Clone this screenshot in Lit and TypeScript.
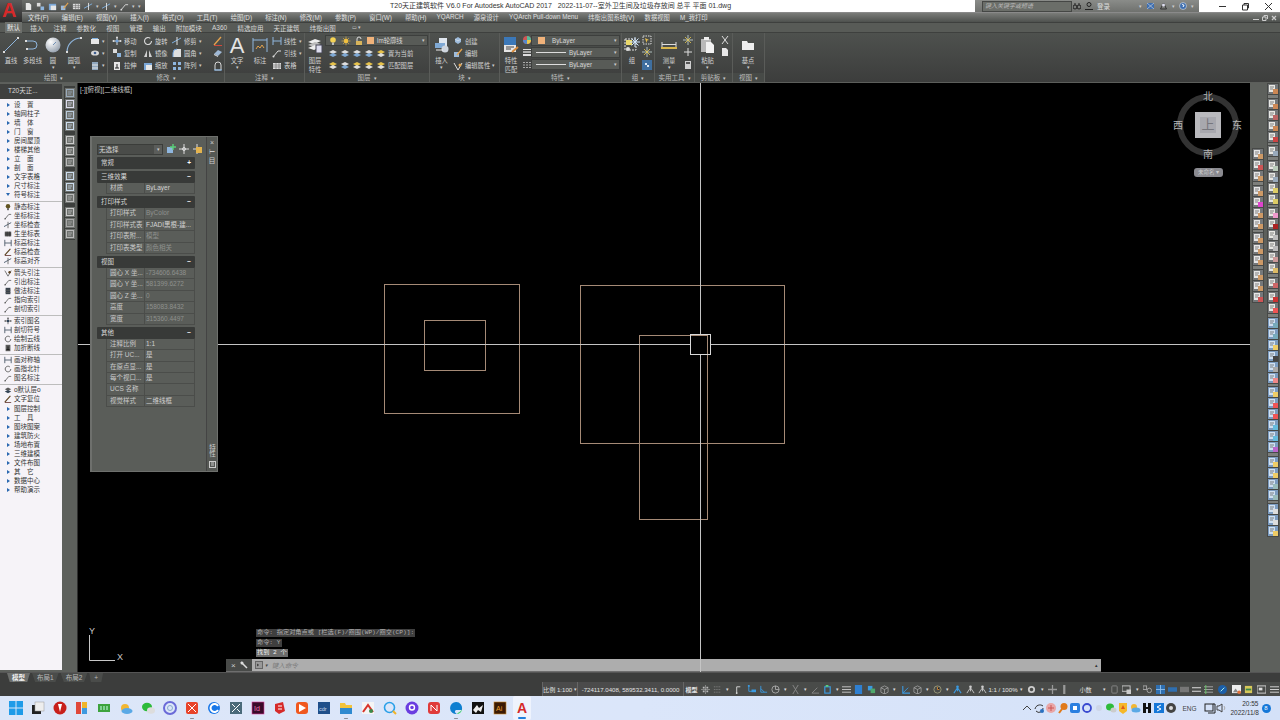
import { LitElement, html, css, svg } from "lit";
import { customElement } from "lit/decorators.js";

const ic = (w: number, h: number, body: unknown) =>
  html`<svg class="ic" width=${w} height=${h} viewBox=${`0 0 ${w} ${h}`}>${body}</svg>`;

// small 10x10 ribbon glyphs
const G: Record<string, unknown> = {
  rect: svg`<rect x="1" y="3" width="8" height="5" fill="#e8e8e8"/><rect x="2" y="2" width="6" height="1" fill="#7fb0e0"/>`,
  eye: svg`<ellipse cx="5" cy="5" rx="4" ry="2.6" fill="#d8d8d8"/><circle cx="5" cy="5" r="1.3" fill="#3f5f8f"/>`,
  hatch: svg`<rect x="2" y="1" width="6" height="8" fill="#8fa6bd"/><path d="M2 4h6M2 7h6" stroke="#e4e4e4"/>`,
  move: svg`<path d="M5 1v8M1 5h8" stroke="#d9d9d9"/><circle cx="5" cy="5" r="1.6" fill="#6fa0d8"/><circle cx="5" cy="1.5" r="1" fill="#ddd"/><circle cx="1.5" cy="5" r="1" fill="#ddd"/><circle cx="8.5" cy="5" r="1" fill="#ddd"/>`,
  rotate: svg`<path d="M8.5 5a3.5 3.5 0 1 1-1.2-2.6" fill="none" stroke="#d8d8d8" stroke-width="1.1"/>`,
  trim: svg`<path d="M0 7l9-5" stroke="#7fb0e0"/><path d="M5 1v8" stroke="#e0e0e0"/>`,
  copy: svg`<rect x="1" y="1" width="4" height="4" fill="#dcdcdc"/><rect x="5" y="5" width="4" height="4" fill="#8fb6de"/>`,
  mirror: svg`<path d="M1 9l3-7v7zM9 9L6 2v7z" fill="#d0d0d0"/>`,
  fillet: svg`<path d="M1 9V5a4 4 0 0 1 4-4h4v8z" fill="#dfdfdf"/><path d="M1 9V5a4 4 0 0 1 4-4" fill="none" stroke="#6fa0d8"/>`,
  stretch: svg`<rect x="2" y="1" width="6" height="8" fill="#e6e6e6"/><path d="M5 3v4M3 7h4" stroke="#222"/>`,
  scale: svg`<rect x="1" y="2" width="8" height="7" fill="#7aa6d6"/><rect x="3" y="4" width="6" height="5" fill="#e6e6e6"/>`,
  array: svg`<path d="M1 1h3v3H1zM6 1h3v3H6zM1 6h3v3H1zM6 6h3v3H6z" fill="#8fb6de"/>`,
  pen: svg`<path d="M1 9l7-8" stroke="#e3a34e" stroke-width="1.4"/><path d="M1 9.5h8" stroke="#d04a3a"/>`,
  erase: svg`<path d="M1 6l4-4 4 2-4 4z" fill="#9fb9d6"/><path d="M1 6l4 2v1L1 7z" fill="#ddd"/>`,
  offset: svg`<path d="M2 9V4a3 3 0 0 1 6 0v5z" fill="none" stroke="#d8d8d8"/><path d="M1 9h8" stroke="#7fb0e0"/>`,
  dimlin: svg`<path d="M1 1v8M9 1v8M1 5h8" stroke="#8fb6de"/>`,
  leader: svg`<path d="M1 9l5-6h3" fill="none" stroke="#ddd"/><circle cx="1.5" cy="8.5" r="1" fill="#ddd"/>`,
  table: svg`<rect x="1" y="2" width="8" height="6" fill="#ddd"/><path d="M1 4h8M1 6h8M4 2v6M7 2v6" stroke="#666" stroke-width=".6"/>`,
  bulb: svg`<circle cx="5" cy="4" r="2.8" fill="#f4d253"/><rect x="4" y="6.5" width="2" height="2.5" fill="#bbb"/>`,
  sun: svg`<circle cx="5" cy="5" r="2.2" fill="#f0c040"/><path d="M5 .5v9M.5 5h9M2 2l6 6M8 2l-6 6" stroke="#f0c040" stroke-width=".6"/>`,
  lock: svg`<rect x="2" y="5" width="6" height="4" fill="#d8b45a"/><path d="M3 5V3a2 2 0 0 1 4 0" fill="none" stroke="#ddd"/>`,
  lay1: svg`<path d="M1 4l4-2 4 2-4 2z" fill="#dfdfdf"/><path d="M1 7l4-2 4 2-4 2z" fill="#7fa9d4"/>`,
  lay2: svg`<path d="M1 4l4-2 4 2-4 2z" fill="#e6c24a"/><path d="M1 7l4-2 4 2-4 2z" fill="#dfdfdf"/>`,
  block: svg`<path d="M2 3l3-2 3 2v3l-3 2-3-2z" fill="#9dbbdc"/><path d="M2 3l3 2 3-2" stroke="#eee" fill="none" stroke-width=".6"/>`,
  edit: svg`<path d="M1 4h5v5H1z" fill="#9dbbdc"/><path d="M4 7l5-6" stroke="#e3a34e" stroke-width="1.3"/>`,
  attr: svg`<path d="M1 2l4 7 4-7" fill="none" stroke="#ddd"/><circle cx="7" cy="4" r="1.5" fill="#e3a34e"/>`,
  wheel: svg`<circle cx="5" cy="5" r="4" fill="#c55"/><path d="M5 5V1a4 4 0 0 1 4 4z" fill="#5b9"/><path d="M5 5h4a4 4 0 0 1-4 4z" fill="#e7c94d"/><path d="M5 5v4a4 4 0 0 1-4-4z" fill="#58c"/>`,
  lw: svg`<path d="M1 2.5h8" stroke="#ddd"/><path d="M1 5h8" stroke="#ddd" stroke-width="1.4"/><path d="M1 8h8" stroke="#ddd" stroke-width="2"/>`,
  ltype: svg`<path d="M1 2.5h8M1 5h8M1 7.5h8" stroke="#aaa" stroke-dasharray="2 1"/>`,
  sel: svg`<rect x="1" y="1" width="8" height="8" fill="none" stroke="#ddd" stroke-dasharray="1.5 1"/><path d="M3 3l4 2-2 .6L4.5 8z" fill="#e8c04c"/>`,
  grpsel: svg`<rect x="0" y="0" width="10" height="10" fill="#3f6f9f"/><path d="M3 3h2v2H3zM5 5h2v2H5z" fill="#dfe9f4"/>`,
  spark: svg`<path d="M5 0v10M0 5h10" stroke="#cdd" stroke-width=".8"/><path d="M2 2l6 6M8 2L2 8" stroke="#e7c94d" stroke-width=".8"/>`,
  plus: svg`<path d="M5 1v8M1 5h8" stroke="#ddd"/>`,
  calc: svg`<rect x="2" y="1" width="6" height="8" fill="#cfcfcf"/><rect x="3" y="2" width="4" height="2" fill="#555"/>`,
  cut: svg`<path d="M2 1l6 8M8 1L2 9" stroke="#ddd"/>`,
  pasteS: svg`<path d="M2 1h4l2 2v6H2z" fill="#e8e8e8"/>`,
};
const g = (n: string) => ic(10, 10, G[n]);

// big ribbon glyphs, 16x16
const B: Record<string, unknown> = {
  line: svg`<path d="M1 15L15 1" stroke="#8fb6de" stroke-width="1"/><rect x="0" y="14" width="2" height="2" fill="#ddd"/><rect x="14" y="0" width="2" height="2" fill="#ddd"/>`,
  pline: svg`<path d="M1 4h7a4 4 0 0 1 0 8H2" fill="none" stroke="#8fb6de"/><rect x="0" y="3" width="2" height="2" fill="#ddd"/><rect x="1" y="11" width="2" height="2" fill="#ddd"/>`,
  circle: svg`<defs><radialGradient id="sph" cx=".35" cy=".3" r=".8"><stop offset="0" stop-color="#fff"/><stop offset="1" stop-color="#8e9aa8"/></radialGradient></defs><circle cx="8" cy="8" r="7.5" fill="url(#sph)"/><path d="M8 8l3-3" stroke="#6f8fb4"/>`,
  arc: svg`<path d="M1 15A14 14 0 0 1 15 1" fill="none" stroke="#8fb6de" stroke-width="1.2"/><rect x="0" y="14" width="2" height="2" fill="#ddd"/><rect x="14" y="0" width="2" height="2" fill="#ddd"/>`,
  dim: svg`<path d="M1 1v14M15 1v14M1 3h14" stroke="#8fb6de"/><path d="M4 12l2-3 2 2 2-3 2 3" fill="none" stroke="#e3a34e"/>`,
  layer: svg`<path d="M1 5l7-3 6 2-7 3z" fill="#eee"/><path d="M1 8l7-3 6 2-7 3z" fill="#bbb"/><path d="M1 11l7-3 6 2-7 3z" fill="#eee"/><rect x="9" y="8" width="6" height="8" fill="#dde" stroke="#445"/>`,
  insert: svg`<rect x="5" y="1" width="8" height="10" fill="#dfe6ee"/><rect x="1" y="6" width="10" height="5" fill="#7fa9d4"/><circle cx="11" cy="12" r="3.5" fill="#cfd6de"/><path d="M2 13h7" stroke="#eee"/>`,
  match: svg`<rect x="1" y="0" width="12" height="8" fill="#3b78b8"/><rect x="1" y="8" width="12" height="7" fill="#e6e6e6"/><path d="M3 10h8M3 12h5" stroke="#444"/><path d="M9 15l6-5" stroke="#d68a3a" stroke-width="2"/>`,
  group: svg`<rect x="1" y="2" width="11" height="11" fill="none" stroke="#ddd" stroke-dasharray="2 1"/><rect x="2" y="3" width="6" height="5" fill="#e9d86a"/><circle cx="4" cy="12" r="2" fill="#ddd"/><path d="M11 0v10M6 5h10M7.500 1.500l7 7M14.500 1.500l-7 7" stroke="#cfe4fa"/>`,
  measure: svg`<path d="M1 5v5M15 5v5M1 7.500h14" stroke="#ddd"/><rect x="0" y="10" width="16" height="2" fill="#d9b64c"/>`,
  paste: svg`<rect x="1" y="2" width="10" height="13" fill="#b9b9b9"/><rect x="4" y="0" width="5" height="3" fill="#eee"/><path d="M6 5h5l3 3v8H6z" fill="#f2f2f2"/>`,
  base: svg`<path d="M2 4h5l1 2h6v7H2z" fill="#eee"/>`,
};
const big = (n: string) => ic(16, 16, B[n]);

// toolbar icon on the left and right strips, pale page with a coloured mark
const tool = (accent: string, base = "#e8e8e4", blue = false) =>
  ic(10, 10, svg`<rect width="10" height="10" fill=${blue ? "#7c9cc0" : "#75787a"}/>
    <rect x="1" y="1" width="6" height="7" fill=${base}/>
    <path d="M2 3h4M2 5h3" stroke="#555" stroke-width=".7"/>
    <rect x="5" y="5" width="5" height="5" fill=${accent}/>`);

const MENU = ["文件(F)", "编辑(E)", "视图(V)", "插入(I)", "格式(O)", "工具(T)", "绘图(D)", "标注(N)", "修改(M)", "参数(P)", "窗口(W)", "帮助(H)", "YQARCH", "源泉设计", "YQArch Pull-down Menu", "纬衡出图系统(V)", "数据视图", "M_我打印"];
const TABS = ["默认", "插入", "注释", "参数化", "视图", "管理", "输出", "附加模块", "A360", "精选应用", "天正建筑", "纬衡出图"];

type T20Row = { t: string; i?: string };
const T20: T20Row[][] = [
  ["设　置", "轴网柱子", "墙　体", "门　窗", "房间屋顶", "楼梯其他", "立　面", "剖　面", "文字表格", "尺寸标注", "符号标注"].map((t) => ({ t })),
  [["静态标注", "bulb"], ["坐标标注", "leader"], ["坐标检查", "trim"], ["生坐标表", "table"], ["标高标注", "dimlin"], ["标高检查", "pen"], ["标高对齐", "trim"]].map(([t, i]) => ({ t, i })),
  [["箭头引注", "attr"], ["引出标注", "leader"], ["做法标注", "hatch"], ["指向索引", "leader"], ["剖切索引", "leader"]].map(([t, i]) => ({ t, i })),
  [["索引图名", "move"], ["剖切符号", "dimlin"], ["绘制云线", "rotate"], ["加折断线", "stretch"]].map(([t, i]) => ({ t, i })),
  [["画对称轴", "dimlin"], ["画指北针", "rotate"], ["图名标注", "leader"]].map(([t, i]) => ({ t, i })),
  [["o默认层o", "lay1"], ["文字复位", "pen"]].map(([t, i]) => ({ t, i })),
  ["图层控制", "工　具", "图块图案", "建筑防火", "场地布置", "三维建模", "文件布图", "其　它", "数据中心", "帮助演示"].map((t) => ({ t })),
];

type Row = [string, string?, boolean?];
type Sec = [string, string, Row[]];
const PROPS: Sec[] = [
  ["常规", "+", []],
  ["三维效果", "−", [["材质", "ByLayer", true]]],
  ["打印样式", "−", [["打印样式", "ByColor"], ["打印样式表", "FJADI黑根-建...", true], ["打印表附...", "模型"], ["打印表类型", "颜色相关"]]],
  ["视图", "−", [["圆心 X 坐...", "-734606.6438"], ["圆心 Y 坐...", "581399.6272"], ["圆心 Z 坐...", "0"], ["高度", "158083.8432"], ["宽度", "315360.4497"]]],
  ["其他", "−", [["注释比例", "1:1", true], ["打开 UC...", "是", true], ["在原点显...", "是", true], ["每个视口...", "是", true], ["UCS 名称", ""], ["视觉样式", "二维线框", true]]],
];

// status bar: [glyph or text, cell width]
const ST: Record<string, unknown> = {
  grid: svg`<path d="M2 2h2v2H2zM6 2h2v2H6zM2 6h2v2H2zM6 6h2v2H6z" fill="#bbb"/><path d="M5 0v10M0 5h10" stroke="#bbb" stroke-width=".6"/>`,
  dots: svg`<path d="M1 2h8M1 5h8M1 8h8" stroke="#888" stroke-dasharray="1 1"/>`,
  infer: svg`<path d="M3 9V2h4" fill="none" stroke="#ddd"/><circle cx="3" cy="9" r="1" fill="#ddd"/>`,
  snap: svg`<path d="M2 1v6h8" fill="none" stroke="#3b9ae0"/><rect x="1" y="0" width="2" height="2" fill="#3b9ae0"/><rect x="5" y="5" width="5" height="3" fill="#3b9ae0"/>`,
  ortho: svg`<path d="M2 1v7h7" fill="none" stroke="#3b9ae0"/><path d="M2 4l4 4" stroke="#3b9ae0"/>`,
  polar: svg`<circle cx="5" cy="5" r="4" fill="none" stroke="#aaa"/><path d="M5 5V1M5 5h4" stroke="#aaa"/>`,
  iso: svg`<path d="M2 0l6 10M8 0L2 10" stroke="#8a8a8a"/>`,
  angle: svg`<path d="M1 9h8M1 9l6-6" stroke="#888"/>`,
  osnap: svg`<rect x="2" y="2" width="6" height="7" fill="none" stroke="#3b9ae0" stroke-width="1.3"/><rect x="3" y="0" width="3" height="2" fill="#5ad07a"/>`,
  lw: svg`<path d="M0 2h10M0 5h10M0 8h10" stroke="#ccc"/>`,
  bsq: svg`<rect x="1" y="0" width="8" height="10" fill="#2f7fd0"/>`,
  pick: svg`<rect x="1" y="1" width="5" height="5" fill="#3b9ae0"/><rect x="4" y="4" width="5" height="5" fill="#4fa86a"/>`,
  cube: svg`<path d="M5 1l4 2v5l-4 2-4-2V3zM1 3l4 2 4-2M5 5v5" fill="none" stroke="#aaa" stroke-width=".8"/>`,
  ucs: svg`<path d="M2 1v8h8" fill="none" stroke="#3b9ae0" stroke-width="1.2"/><path d="M2 9l6-6" stroke="#3b9ae0"/>`,
  clock: svg`<circle cx="5" cy="5" r="4" fill="none" stroke="#9a9a7a"/><path d="M5 2v3h2" stroke="#d08a3a"/>`,
  person: svg`<circle cx="5" cy="2" r="1.5" fill="#3b9ae0"/><path d="M5 3L1 9M5 3l4 6M5 3v4" stroke="#3b9ae0" stroke-width="1.2"/>`,
  person2: svg`<circle cx="5" cy="2" r="1.5" fill="#ccc"/><path d="M5 3L1 9M5 3l4 6M5 3v4" stroke="#ccc"/>`,
  gear: svg`<circle cx="5" cy="5" r="3" fill="none" stroke="#ccc" stroke-width="2"/>`,
  plus: svg`<path d="M5 0v10M0 5h10" stroke="#999" stroke-width="1.4"/>`,
  grip: svg`<rect x="3.500" y="0" width="2.500" height="10" fill="#999"/>`,
  calc: svg`<rect x="2" y="1" width="6" height="8" rx="1" fill="none" stroke="#888"/>`,
  mon: svg`<rect x="0" y="1" width="9" height="6" fill="none" stroke="#ccc"/><rect x="5" y="5" width="5" height="5" fill="#ccc"/>`,
  iso2: svg`<rect x="0" y="1" width="4" height="4" fill="none" stroke="#aaa"/><circle cx="7" cy="6" r="2.500" fill="none" stroke="#aaa"/>`,
  bgrid: svg`<rect width="10" height="10" fill="#2f6fb0"/><path d="M5 0v10M0 5h10" stroke="#8fc0ee"/>`,
  bbar: svg`<rect y="2.500" width="10" height="5" fill="#2f6fb0"/>`,
  gbar: svg`<rect y="2" width="10" height="6" fill="#777"/>`,
  two: svg`<path d="M0 3h10M0 7h10" stroke="#ddd" stroke-width="1.2"/>`,
  three: svg`<path d="M0 2h10M0 5h10M0 8h10" stroke="#aaa"/><path d="M2 0v10" stroke="#6c6"/>`,
  bcir: svg`<circle cx="5" cy="5" r="5" fill="#1c5fa8"/><path d="M3 7l4-4" stroke="#bfe" />`,
  img: svg`<rect width="10" height="9" fill="#eee"/><path d="M1 8l3-4 3 4" fill="#888"/><circle cx="8" cy="8" r="2" fill="#e0703a"/>`,
  print: svg`<rect x="1" y="1" width="8" height="8" fill="#d8c85a"/><path d="M2 5h6" stroke="#3a8a4a" stroke-width="2"/>`,
  full: svg`<rect y="1" width="10" height="8" fill="none" stroke="#ddd"/><rect x="2" y="3" width="4" height="3" fill="#ddd"/>`,
  menu: svg`<path d="M0 2h10M0 5h10M0 8h10" stroke="#ddd"/>`,
};
const STATUS: [string, number][] = [["grid", 12], ["dots", 12], ["v", 8], ["infer", 14], ["snap", 12], ["ortho", 12], ["polar", 13], ["v", 7], ["iso", 13], ["v", 7], ["angle", 12], ["osnap", 12], ["v", 8], ["lw", 11], ["bsq", 13], ["pick", 13], ["cube", 12], ["v", 8], ["ucs", 14], ["cube", 11], ["v", 8], ["clock", 12], ["v", 8], ["person", 13], ["person2", 12], ["person2", 12]];
const STATUS2: [string, number][] = [["gear", 13], ["v", 8], ["plus", 12], ["grip", 13]];
const STATUS3: [string, number][] = [["calc", 12], ["mon", 13], ["v", 8], ["iso2", 13], ["bgrid", 12], ["bbar", 12], ["gbar", 12], ["two", 12], ["three", 12], ["bcir", 16], ["img", 12], ["print", 12], ["full", 14], ["menu", 12]];

// taskbar icons, 14x14
const TB: unknown[] = [
  svg`<path d="M0 0h6.500v6.500H0zM7.500 0H14v6.500H7.500zM0 7.500h6.500V14H0zM7.500 7.500H14V14H7.500z" fill="#1f9be8"/>`,
  svg`<rect x="1" y="4" width="9" height="9" fill="#222"/><rect x="4" y="1" width="9" height="9" fill="#eee" stroke="#999" stroke-width=".5"/>`,
  svg`<circle cx="7" cy="7" r="6.500" fill="#c8201c"/><path d="M5 3l4 0-2 8z" fill="#fff"/>`,
  svg`<rect x="1" y="1" width="5" height="12" fill="#e0483a"/><rect x="7" y="1" width="5" height="6" fill="#f0b429"/><rect x="7" y="7" width="5" height="6" fill="#3f9ae0"/>`,
  svg`<rect x="1" y="3" width="12" height="8" fill="#3da33d"/><path d="M4 5v4M7 5v4M10 5v4" stroke="#cfe" />`,
  svg`<circle cx="6" cy="7" r="4" fill="#f2b632"/><ellipse cx="8" cy="10" rx="5.500" ry="3" fill="#5aa9e6"/>`,
  svg`<ellipse cx="6" cy="6" rx="5" ry="4.200" fill="#2dbb3a"/><ellipse cx="10" cy="9.500" rx="4" ry="3.200" fill="#ddd"/>`,
  svg`<circle cx="7" cy="7" r="6" fill="none" stroke="#6a6ad8" stroke-width="2"/><circle cx="7" cy="7" r="2.500" fill="none" stroke="#8ac" />`,
  svg`<rect x="1" y="1" width="12" height="12" rx="2" fill="#e8432a"/><path d="M3 3l8 8M11 3l-8 8" stroke="#fff"/>`,
  svg`<circle cx="7" cy="7" r="6" fill="#1877e8"/><path d="M11 5a4 4 0 1 0 0 4" fill="none" stroke="#fff" stroke-width="2"/>`,
  svg`<rect x="1" y="1" width="12" height="12" fill="#4a6a7a"/><path d="M3 11l8-8M3 3l3 3M8 8l3 3" stroke="#fff"/>`,
  svg`<rect x="1" y="1" width="12" height="12" fill="#3a0a2a" stroke="#e0409a" stroke-width=".6"/><text x="3" y="10" font-size="7" fill="#f070b0" font-family="Liberation Sans">Id</text>`,
  svg`<path d="M2 3l8-2 2 9-6 3-4-3z" fill="#d62a2a"/><path d="M5 5h4M5 8h4" stroke="#fff"/>`,
  svg`<rect x="1" y="1" width="12" height="12" rx="3" fill="#f0581f"/><path d="M4 3l7 4-7 4z" fill="#fff"/>`,
  svg`<rect x="1" y="1" width="12" height="12" fill="#1f4f8a"/><text x="2" y="9.500" font-size="5.500" fill="#cde" font-family="Liberation Sans">cdr</text>`,
  svg`<path d="M1 2h5l1 2h6v9H1z" fill="#f3c33b"/><rect x="1" y="7" width="12" height="6" fill="#2f8ad0"/>`,
  svg`<rect x="1" y="1" width="12" height="12" fill="#f5f5f5"/><path d="M2 11l5-7 5 7" fill="none" stroke="#d8342a" stroke-width="2"/><circle cx="10" cy="10" r="2" fill="#3a8a4a"/>`,
  svg`<circle cx="6.500" cy="6.500" r="5" fill="none" stroke="#2aa0e8" stroke-width="1.600"/><path d="M10 10l3 3" stroke="#f0b429" stroke-width="2"/>`,
  svg`<circle cx="7" cy="7" r="6.500" fill="#6a3de0"/><circle cx="7" cy="6.500" r="2.500" fill="none" stroke="#fff" stroke-width="1.400"/>`,
  svg`<rect x="1" y="1" width="12" height="12" rx="3" fill="#e03a3a"/><path d="M4 10V4l6 6V4" fill="none" stroke="#fff"/>`,
  svg`<path d="M13 8A6 6 0 1 0 8 13c-2-1-3-3-1-4h6z" fill="#0f7fd0"/><path d="M13 8c0 3-3 5-5 5 1-2 3-1 5-5z" fill="#3fd06a"/>`,
  svg`<rect x="1" y="1" width="12" height="12" fill="#111"/><path d="M2 9l4-5 2 3 4-3-2 7-3-2-2 3z" fill="#eee"/>`,
  svg`<rect x="1" y="1" width="12" height="12" fill="#3a1a04" stroke="#d08a2a" stroke-width=".6"/><text x="3" y="10" font-size="7" fill="#f0a030" font-family="Liberation Sans">Ai</text>`,
];
const DOTTED = new Set([8, 15, 20]);

const TRAY: unknown[] = [
  svg`<path d="M2 8l4-4 4 4" fill="none" stroke="#444"/>`,
  svg`<path d="M2 7a5 5 0 0 1 8-3M10 6a4 4 0 0 1-7 3" fill="none" stroke="#333"/><circle cx="9" cy="9" r="2" fill="#2a6fc0"/>`,
  svg`<circle cx="6" cy="6" r="5" fill="#e9a6a6"/><path d="M3 6h6M6 3v6" stroke="#c55"/>`,
  svg`<circle cx="7" cy="4.500" r="3.500" fill="#e07a1a"/><path d="M5 7l-3 4" stroke="#e07a1a" stroke-width="2"/>`,
  svg`<rect x="1" y="1" width="10" height="10" rx="2" fill="#2a7fe0"/><rect x="4" y="4" width="4" height="4" fill="#fff"/>`,
  svg`<circle cx="6" cy="6" r="4" fill="none" stroke="#3a4ad0" stroke-width="1.800"/>`,
  svg`<circle cx="6" cy="6" r="3" fill="#cdd6e8"/>`,
  svg`<ellipse cx="5" cy="5" rx="4" ry="3.500" fill="#2dbb3a"/><ellipse cx="8.500" cy="8" rx="3" ry="2.500" fill="#ccc"/>`,
  svg`<path d="M2 1h8v8l-4 3-4-3z" fill="#f5b82a"/><path d="M6 3l-2 4h4z" fill="#e05a1a"/>`,
  svg`<circle cx="5" cy="5" r="3" fill="#f2b632"/><ellipse cx="7" cy="8" rx="4.500" ry="2.500" fill="#5aa9e6"/>`,
  svg`<path d="M2 1h3v10H2zM7 1h3v10H7zM2 5h8v2H2z" fill="#111"/>`,
  svg`<rect x="1" y="1" width="10" height="10" fill="#1577d8"/><path d="M8 3L4 5l4 2-4 2" fill="none" stroke="#fff"/>`,
  svg`<circle cx="6" cy="6" r="5" fill="#444"/><circle cx="6" cy="6" r="2" fill="#ddd"/>`,
];

@customElement("app-root")
export class AppRoot extends LitElement {
  static styles = css`
    :host {
      display: block;
      width: 1280px;
      height: 720px;
      overflow: hidden;
      font-family: "Liberation Sans", "Noto Sans CJK SC", sans-serif;
      font-size: 6.500px;
      color: #cfcfcf;
      background: #000;
    }
    .app { display: flex; flex-direction: column; height: 720px; position: relative; }
    .ic { display: block; flex: none; }
    .caret { font-size: 5px; color: #ccc; line-height: 1; }

    .titlebar { height: 12px; background: #fff; display: flex; color: #333; flex: none; }
    .qat { width: 123px; margin-left: 22px; background: linear-gradient(#6b6d6a, #4d4f4d); display: flex; align-items: center; gap: 3px; padding-left: 2px; box-sizing: border-box; }
    .title-text { width: 830px; font-size: 7px; line-height: 12px; padding-left: 245px; box-sizing: border-box; white-space: pre; }
    .info { width: 224px; flex: none; background: linear-gradient(#8a8c89, #6f716e); display: flex; align-items: center; }
    .search { width: 90px; flex: none; height: 11px; margin-left: 7px; background: #6b6e69; border: 1px solid #454745; box-sizing: border-box; font-size: 6px; font-style: italic; color: #bbb; line-height: 9px; padding-left: 2px; white-space: nowrap; overflow: hidden; }
    .info .u { margin-left: 1px; display: flex; align-items: center; gap: 4px; color: #ddd; font-size: 6.500px; white-space: nowrap; }
    .win { display: flex; margin-left: auto; align-items: center; gap: 14px; padding-right: 7px; }

    .appbtn { position: absolute; left: 0; top: 0; width: 22px; height: 22px; background: linear-gradient(#5b5b5b, #2c2c2c); z-index: 3; color: #d52a2a; font: bold 20px/20px "Liberation Sans", sans-serif; padding-left: 2px; box-sizing: border-box; }

    .menubar { height: 10px; margin-left: 22px; background: linear-gradient(#7a7c79, #4e514e); display: flex; align-items: center; color: #e0e0e0; font-size: 6.300px; border-top: 1px solid #8a8a8a; flex: none; box-sizing: border-box; }
    .menubar span { white-space: nowrap; }
    .menubar .items { display: flex; gap: 13.200px; padding-left: 6px; }
    .menubar .items span:nth-child(n + 13) { margin-left: -3px; }
    .menubar .ctl { margin-left: auto; display: flex; gap: 3px; padding-right: 3px; align-items: center; }

    .tabs { height: 11px; background: #585b57; border-top: 1px solid #3e403e; border-bottom: 1px solid #3e403e; display: flex; align-items: center; padding-left: 7px; gap: 10.200px; box-sizing: border-box; flex: none; color: #d6d6d6; font-size: 6.500px; }
    .tabs .on { background: #6d706c; box-shadow: 0 0 0 2px #6d706c; color: #eee; line-height: 8px; }

    .ribbon { height: 50px; flex: none; display: flex; background: linear-gradient(#4e514e, #3c3d3c); border-bottom: 1px solid #5c5e5b; box-sizing: border-box; }
    .panel { display: flex; flex-direction: column; border-right: 1px solid #5a5c59; box-sizing: border-box; flex: none; }
    .pbody { height: 40px; display: flex; }
    .plabel { height: 9px; line-height: 9px; text-align: center; background: #474a47; color: #bdbdbd; font-size: 6.500px; }
    .plabel .caret { margin-left: 3px; }
    .lg { width: 20px; flex: none; display: flex; flex-direction: column; align-items: center; padding-top: 4px; font-size: 6.300px; line-height: 9px; white-space: nowrap; color: #d2d2d2; }
    .lg .ic { margin-bottom: 3px; }
    .lg .a { font: 22px/18px "Liberation Sans", sans-serif; color: #e4e4e4; height: 19px; }
    .sm { display: grid; grid-auto-rows: 12.300px; padding-top: 2px; align-content: start; }
    .s { display: flex; align-items: center; gap: 2px; white-space: nowrap; color: #d2d2d2; font-size: 6.300px; }
    .dd { height: 11px; margin-top: 1px; background: #585b57; border: 1px solid #3d3f3d; box-sizing: border-box; display: flex; align-items: center; color: #d8d8d8; font-size: 6.300px; padding: 0 2px; gap: 3px; }
    .dd .caret { margin-left: auto; }
    .swatch { width: 7px; height: 7px; background: #f0b27a; flex: none; }
    .ln { width: 30px; flex: none; height: 1px; background: #ddd; margin-left: 2px; }

    .work { flex: 1; display: flex; min-height: 0; }
    .t20 { width: 62px; flex: none; background: #5d605c; }
    .t20 .head { height: 15px; margin-top: 1px; background: #3f403f; color: #d8d8d8; line-height: 14px; padding-left: 8px; font-size: 6.500px; box-sizing: border-box; }
    .t20 .list { height: 571px; background: #f6f3f8; box-sizing: border-box; padding-top: 1px; }
    .t20 .row { height: 9px; display: flex; align-items: center; padding-left: 2px; color: #333; font-size: 6.500px; line-height: 9px; white-space: nowrap; }
    .t20 .row .gl { width: 12px; flex: none; display: flex; justify-content: center; }
    .t20 .row .tri { width: 0; height: 0; border-left: 3px solid #2a68b0; border-top: 2.500px solid transparent; border-bottom: 2.500px solid transparent; }
    .t20 .row .tri.down { border: 0; border-top: 3px solid #2a68b0; border-left: 2.500px solid transparent; border-right: 2.500px solid transparent; }
    .t20 .row svg { width: 8px; height: 8px; filter: brightness(.4); }
    .t20 hr { border: 0; margin: 1px 0 0; height: 1px; background: #bdbdbd; }
    .t20 .g { padding-bottom: 1px; }

    .gut { width: 16px; flex: none; background: #5d605c; border-right: 1px solid #2e2e2e; box-sizing: border-box; padding: 3px 0 0 2px; }
    .strip { width: 11px; background: #3d3f3d; display: flex; flex-direction: column; gap: 1px; padding: 2px 0 1px 1px; box-sizing: border-box; }
    .strip .sep { height: 2px; }

    .canvas { flex: 1; position: relative; background: #000; overflow: hidden; }
    .cad { position: absolute; inset: 0; }
    .vp { position: absolute; left: 2px; top: 3px; color: #c9c9c9; font-size: 6.500px; line-height: 8px; }

    .palette { position: absolute; left: 12px; top: 53px; width: 128px; height: 336px; background: #5a5d59; border: 1px solid #6e706d; border-left-width: 2px; box-sizing: border-box; display: flex; }
    .pal-main { width: 114px; padding: 6px 0 0 5px; box-sizing: border-box; }
    .pal-side { flex: 1; background: #555854; border-left: 1px solid #444; display: flex; flex-direction: column; align-items: center; color: #ccc; padding-top: 1px; font-size: 7px; line-height: 9px; }
    .pal-side .end { margin-top: auto; writing-mode: vertical-rl; font-size: 6.500px; margin-bottom: 4px; }
    .pal-top { display: flex; align-items: center; gap: 3px; height: 12px; margin-bottom: 2px; }
    .sel { width: 66px; height: 11px; background: #4a4c49; border: 1px solid #3b3d3a; box-sizing: border-box; color: #d5d5d5; line-height: 9px; font-size: 6.500px; padding-left: 1px; display: flex; }
    .sel .caret { margin-left: auto; width: 8px; text-align: center; background: #5b5d5a; line-height: 9px; }
    .sec { margin: 2px 0 0 0; width: 98px; height: 12px; background: #383a38; color: #d6d6d6; font-size: 6.500px; line-height: 12px; display: flex; justify-content: space-between; padding: 0 4px; box-sizing: border-box; border-radius: 1px; }
    .sec b { font-weight: bold; color: #fff; }
    .prop { margin-left: 9px; width: 89px; height: 11.400px; border-bottom: 1px solid #4b4d4a; border-left: 1px solid #4b4d4a; border-right: 1px solid #4b4d4a; box-sizing: border-box; display: flex; font-size: 6.500px; line-height: 10px; white-space: nowrap; overflow: hidden; }
    .prop .k { width: 38px; flex: none; color: #c9c9c9; padding-left: 3px; box-sizing: border-box; overflow: hidden; border-right: 1px solid #4b4d4a; }
    .prop .v { padding-left: 1px; color: #8f918e; }
    .prop .v.on { color: #d2d2d2; }

    .cube { position: absolute; left: 1094px; top: 7px; width: 72px; height: 90px; color: #b5b5b5; font-size: 10px; line-height: 12px; }
    .cube .ring { position: absolute; left: 5px; top: 4px; width: 62px; height: 62px; border: 6px solid #333; border-radius: 50%; box-sizing: border-box; }
    .cube .face { position: absolute; left: 23px; top: 22px; width: 26px; height: 26px; background: #b9b9bd; display: flex; align-items: center; justify-content: center; }
    .cube .face span { background: #a8a8ae; width: 16px; height: 16px; text-align: center; font-size: 13px; line-height: 16px; color: #76767c; }
    .cube .d { position: absolute; }
    .cube .named { position: absolute; left: 22px; top: 78px; width: 29px; height: 9px; background: #8a8a90; border-radius: 3px; color: #ccc; font-size: 5.500px; line-height: 9px; text-align: center; }

    .ucs { position: absolute; left: 10px; top: 541px; }
    .hist { position: absolute; left: 178px; top: 546px; display: flex; flex-direction: column; gap: 2px; align-items: flex-start; font: 6.200px/8px "Liberation Mono", "Noto Sans CJK SC", monospace; color: #b0b0b0; }
    .hist span { background: #3f3f3f; padding: 0 1px; white-space: pre; }
    .hist span.last { background: #6b6b6b; color: #eee; }
    .cmd { position: absolute; left: 148px; top: 576px; width: 875px; height: 13px; background: #adadad; display: flex; align-items: center; border-bottom: 1px solid #6e6e6e; box-sizing: border-box; }
    .cmd .grip { width: 26px; height: 100%; background: #484a48; color: #ccc; display: flex; align-items: center; gap: 4px; padding-left: 5px; box-sizing: border-box; font-size: 8px; }
    .cmd .inp { margin-left: 3px; display: flex; align-items: center; gap: 2px; font-size: 6.500px; font-style: italic; color: #7a7a7a; }
    .cmd .end { margin-left: auto; padding-right: 3px; color: #333; }

    .rt { width: 30px; flex: none; background: #5d605c; display: flex; gap: 3px; align-items: flex-start; padding-left: 2px; box-sizing: border-box; }
    .rt .col { background: #474947; display: flex; flex-direction: column; padding: 1px; gap: 1px; }
    .rt .col .sep { height: 2.500px; margin: 0; background: #7d7f7c; }
    .rt .inner { margin-top: 65px; }
    .rt .outer { margin-top: 0; }

    .bottom { height: 24px; flex: none; background: #3c3d3c; border-top: 1px solid #555; box-sizing: border-box; }
    .ltabs { height: 9px; display: flex; gap: 2px; padding-left: 7px; font-size: 6.500px; line-height: 10px; color: #bbb; }
    .ltabs span { padding: 0 5px; background: #4a4c4a; clip-path: polygon(0 0, 100% 0, 88% 100%, 12% 100%); }
    .ltabs span.on { background: #6c6e6c; color: #f2f2f2; font-weight: bold; }
    .status { height: 14px; display: flex; margin-left: 542px; align-items: stretch; color: #e2e2e2; font-size: 6.100px; }
    .status .c { display: flex; align-items: center; justify-content: center; flex: none; white-space: nowrap; background: #494b49; }
    .status .c.t { border-left: 1px solid #666; box-sizing: border-box; background: #4b4b4b; }
    .status .c svg { width: 9px; height: 9px; }
    .status .c .caret { color: #ddd; }

    .taskbar { height: 24px; flex: none; background: linear-gradient(90deg, #dce6f8, #dbe6fa 50%, #d4e1f8); display: flex; align-items: center; padding-left: 5px; position: relative; color: #333; }
    .app-i { width: 22px; height: 24px; display: flex; align-items: center; justify-content: center; position: relative; flex: none; }
    .app-i.dot::after { content: ""; position: absolute; bottom: 1px; left: 9px; width: 4px; height: 1.500px; background: #8a8f99; border-radius: 1px; }
    .app-i.on { background: #eef3fd; width: 18px; margin-left: 2px; border-radius: 2px; }
    .app-i.on::after { content: ""; position: absolute; bottom: 1px; left: 5px; width: 8px; height: 2px; background: #1f7fdc; border-radius: 1px; }
    .tray { margin-left: auto; display: flex; align-items: center; padding-right: 9.500px; gap: 0; }
    .tray .t { width: 12px; display: flex; justify-content: center; }
    .tray .eng { font-size: 6.500px; margin: 0 7px 0 5px; color: #444; }
    .tray .clock { font-size: 6.500px; line-height: 9px; text-align: right; margin: 0 3px; color: #333; width: 28px; white-space: nowrap; }
    .badge { width: 9px; height: 9px; border-radius: 50%; background: #1577d8; color: #fff; font-size: 6px; line-height: 9px; text-align: center; }
  `;

  panel(w: number, label: string, body: unknown, caret = true) {
    return html`<div class="panel" style="width:${w}px">
      <div class="pbody">${body}</div>
      <div class="plabel">${label}${caret ? html`<span class="caret">▾</span>` : ""}</div>
    </div>`;
  }

  lg(icon: unknown, label: string, width = 20, more = "", caret = false) {
    return html`<div class="lg" style="width:${width}px">${icon}<span>${label}</span>${more ? html`<span>${more}</span>` : ""}${caret ? html`<span class="caret">▾</span>` : ""}</div>`;
  }

  s(icon: string, label = "", caret = false) {
    return html`<div class="s">${g(icon)}${label}${caret ? html`<span class="caret">▾</span>` : ""}</div>`;
  }

  renderRibbon() {
    return html`<div class="ribbon">
      ${this.panel(108, "绘图", html`
        ${this.lg(big("line"), "直线", 22)}
        ${this.lg(big("pline"), "多段线", 21)}
        ${this.lg(big("circle"), "圆", 20, "", true)}
        ${this.lg(big("arc"), "圆弧", 22, "", true)}
        <div class="sm" style="margin-left:5px">${this.s("rect", "", true)}${this.s("eye", "", true)}${this.s("hatch", "", true)}</div>`)}
      ${this.panel(117, "修改", html`
        <div class="sm" style="grid-template-columns:31px 29px 32px 14px;padding-left:4px">
          ${this.s("move", "移动")}${this.s("rotate", "旋转")}${this.s("trim", "修剪", true)}<div class="s" style="margin-left:9px">${g("pen")}</div>
          ${this.s("copy", "复制")}${this.s("mirror", "镜像")}${this.s("fillet", "圆角", true)}<div class="s" style="margin-left:9px">${g("erase")}</div>
          ${this.s("stretch", "拉伸")}${this.s("scale", "缩放")}${this.s("array", "阵列", true)}<div class="s" style="margin-left:9px">${g("offset")}</div>
        </div>`)}
      ${this.panel(80, "注释", html`
        ${this.lg(html`<span class="a">A</span>`, "文字", 24, "", true)}
        ${this.lg(big("dim"), "标注", 22)}
        <div class="sm" style="margin-left:1px">${this.s("dimlin", "线性", true)}${this.s("leader", "引线", true)}${this.s("table", "表格")}</div>`)}
      ${this.panel(125, "图层", html`
        ${this.lg(big("layer"), "图层", 20, "特性")}
        <div style="flex:1;padding-top:2px;box-sizing:border-box;padding-right:1px">
          <div class="dd" style="margin-top:0">${g("bulb")}${g("sun")}${g("lock")}<span class="swatch"></span><span>lm轮廓线</span><span class="caret">▾</span></div>
          <div class="s" style="height:12px;margin-top:1px;padding-left:3px">${g("lay1")}${g("lay1")}${g("lay1")}${g("lay1")}${g("lay2")}<span>置为当前</span></div>
          <div class="s" style="height:12px;padding-left:3px">${g("lay2")}${g("lay1")}${g("lay2")}${g("lay2")}${g("lay2")}<span>匹配图层</span></div>
        </div>`)}
      ${this.panel(70, "块", html`
        ${this.lg(big("insert"), "插入", 23, "", true)}
        <div class="sm">${this.s("block", "创建")}${this.s("edit", "编辑")}${this.s("attr", "编辑属性", true)}</div>`)}
      ${this.panel(122, "特性", html`
        ${this.lg(big("match"), "特性", 22, "匹配")}
        <div class="sm" style="width:9px;grid-auto-rows:12.300px">${g("wheel")}${g("lw")}${g("ltype")}</div>
        <div style="flex:1;padding-top:2px;padding-left:0;padding-right:1px">
          <div class="dd" style="margin-top:0"><span class="swatch" style="margin-left:4px"></span><span style="margin-left:4px">ByLayer</span><span class="caret">▾</span></div>
          <div class="dd"><span class="ln"></span><span>ByLayer</span><span class="caret">▾</span></div>
          <div class="dd"><span class="ln"></span><span>ByLayer</span><span class="caret">▾</span></div>
        </div>`)}
      ${this.panel(33, "组", html`
        ${this.lg(big("group"), "组", 20)}
        <div class="sm">${g("sel")}${g("spark")}${g("grpsel")}</div>`)}
      ${this.panel(40, "实用工具", html`
        ${this.lg(big("measure"), "测量", 28, "", true)}
        <div class="sm">${g("spark")}${g("plus")}${g("calc")}</div>`)}
      ${this.panel(38, "剪贴板", html`
        ${this.lg(big("paste"), "粘贴", 25, "", true)}
        <div class="sm">${g("cut")}${g("pasteS")}</div>`)}
      ${this.panel(32, "视图", html`${this.lg(big("base"), "基点", 30, "", true)}`)}
    </div>`;
  }

  renderT20() {
    return html`<div class="t20">
      <div class="head">T20天正...</div>
      <div class="list">
        ${T20.map((grp, gi) => html`
          <div class="g">${grp.map((r, ri) => html`<div class="row">
            <span class="gl">${r.i ? g(r.i) : html`<span class=${gi === 0 && ri === 10 ? "tri down" : "tri"}></span>`}</span>
            <span>${r.t}</span>
          </div>`)}</div>
          ${gi < T20.length - 2 ? html`<hr />` : ""}`)}
      </div>
    </div>`;
  }

  renderGutter() {
    const acc = ["#9ab", "#dde", "#bcd", "#cde", "#ccc", "#ccc", "#bbb", "#cde", "#cde", "#bbb", "#ccc", "#aaa", "#bbb"];
    return html`<div class="gut"><div class="strip">
      ${acc.map((c, i) => html`${i === 4 || i === 7 || i === 10 ? html`<div class="sep"></div>` : ""}
        ${ic(10, 10, svg`<rect width="10" height="10" fill="#6f726f"/><rect x="1.500" y="1.500" width="7" height="7" fill="none" stroke=${c}/><path d="M3 4h4M3 6h3" stroke=${c} stroke-width=".7"/>`)}`)}
    </div></div>`;
  }

  renderPalette() {
    return html`<div class="palette">
      <div class="pal-main">
        <div class="pal-top">
          <div class="sel">无选择<span class="caret">▾</span></div>
          ${ic(10, 10, svg`<rect x="1" y="3" width="6" height="6" fill="#8fb6de"/><path d="M7 0v6M4 3h6" stroke="#5ad07a" stroke-width="1.400"/>`)}
          ${ic(10, 10, svg`<path d="M5 0v10M0 5h10" stroke="#ddd"/><circle cx="5" cy="5" r="1.500" fill="none" stroke="#ddd"/>`)}
          ${ic(10, 10, svg`<path d="M5 0v10M1 5h8" stroke="#ddd"/><rect x="4" y="3" width="6" height="6" fill="#e3b34e"/>`)}
        </div>
        ${PROPS.map(([name, sign, rows]) => html`
          <div class="sec">${name}<b>${sign}</b></div>
          ${rows.map(([k, v, on]) => html`<div class="prop"><span class="k">${k}</span><span class=${on ? "v on" : "v"}>${v}</span></div>`)}`)}
      </div>
      <div class="pal-side">
        <span>×</span><span>⊢</span><span>目</span>
        <span class="end">特性</span>
        ${ic(7, 7, svg`<rect x=".500" y=".500" width="6" height="6" fill="none" stroke="#ccc"/><path d="M2 2h3M2 4h3" stroke="#ccc"/>`)}
        <span style="height:3px"></span>
      </div>
    </div>`;
  }

  renderCanvas() {
    return html`<div class="canvas">
      <div class="hist">
        <span>命令: 指定对角点或 [栏选(F)/圈围(WP)/圈交(CP)]:</span>
        <span>命令: Y</span>
        <span class="last">找到 2 个</span>
      </div>
      <div class="cmd">
        <div class="grip"><span>×</span>${ic(8, 8, svg`<path d="M1 1l6 6" stroke="#ddd" stroke-width="1.500"/><circle cx="2" cy="2" r="1.500" fill="#ddd"/>`)}</div>
        <div class="inp">${ic(8, 8, svg`<rect x=".500" y=".500" width="7" height="7" fill="#999" stroke="#666"/><path d="M2 3l1.500 1L2 5" stroke="#333" fill="none"/>`)}<span class="caret" style="color:#444">▾</span>&nbsp;键入命令</div>
        <span class="end caret">▴</span>
      </div>
      <svg class="cad" width="1172" height="589" viewBox="78 83 1172 589" shape-rendering="crispEdges">
        <g fill="none" stroke="#a58a76">
          <rect x="384.500" y="284.500" width="135" height="129" />
          <rect x="424.500" y="320.500" width="61" height="50" />
          <rect x="580.500" y="285.500" width="204" height="158" />
          <rect x="639.500" y="335.500" width="68" height="184" />
        </g>
        <path d="M78 344.500H691M710 344.500H1250M700.500 83V335M700.500 354V672" stroke="#c4c4c4" />
        <rect x="690.500" y="334.500" width="20" height="20" fill="none" stroke="#d8d8d8" />
      </svg>
      <div class="vp">[-][俯视][二维线框]</div>
      ${this.renderPalette()}
      <div class="cube">
        <div class="ring"></div>
        <div class="face"><span>上</span></div>
        <span class="d" style="left:31px;top:1px">北</span>
        <span class="d" style="left:31px;top:59px">南</span>
        <span class="d" style="left:60px;top:30px">东</span>
        <span class="d" style="left:1px;top:30px">西</span>
        <div class="named">未命名 ▾</div>
      </div>
      <div class="ucs">
        ${ic(40, 40, svg`<path d="M1.500 11V36.500H27" fill="none" stroke="#c8c8c8"/>
          <text x="1" y="10" font-size="9" fill="#c8c8c8" font-family="Liberation Sans">Y</text>
          <text x="29" y="36" font-size="9" fill="#c8c8c8" font-family="Liberation Sans">X</text>`)}
      </div>
    </div>`;
  }

  renderRight() {
    const outerAcc = ["#c85", "|", "#c85", "#b66", "#c85", "#c44", "|", "#9ab", "|", "#bcb", "#9ab", "#dc6", "#dc6", "|", "#e9c", "#a22", "#bbb", "#bbb", "#c99", "#db6", "|", "#c66", "|", "#c33", "#e55", "|"];
    const outerBlue = ["#7ab", "#7ab", "#ec6", "#444", "#aaa", "#e88", "|", "#ec6", "#e55", "#e55", "#6bd", "#6bd", "#b6c", "|", "#ec6", "#ec6", "#9bb", "#9bb", "|", "#ddd", "#ddd", "#ec6"];
    const inner = ["#c96", "#c55", "#c96", "|", "#c96", "#d4c", "#c96", "#c96", "|", "#c96", "#c96", "#c96", "|", "#c96", "#c96", "#c55"];
    return html`<div class="rt">
      <div class="col inner">${inner.map((c) => (c === "|" ? html`<div class="sep"></div>` : tool(c, "#e6e6e6")))}</div>
      <div class="col outer">
        ${outerAcc.map((c) => (c === "|" ? html`<div class="sep"></div>` : tool(c)))}
        ${outerBlue.map((c) => (c === "|" ? html`<div class="sep"></div>` : tool(c, "#cfe0f2", true)))}
      </div>
    </div>`;
  }

  cell([n, w]: [string, number]) {
    return html`<div class="c" style="width:${w}px">${n === "v" ? html`<span class="caret">▾</span>` : ic(10, 10, ST[n])}</div>`;
  }

  renderStatus() {
    return html`<div class="status">
      <div class="c t" style="width:35px">比例 1:100&nbsp;<span class="caret">▾</span></div>
      <div class="c t" style="width:106px">-724117.0408, 589532.3411, 0.0000</div>
      <div class="c t" style="width:16px;font-weight:bold">模型</div>
      ${STATUS.map((s) => this.cell(s))}
      <div class="c" style="width:30px">1:1 / 100%</div>
      <div class="c" style="width:7px"><span class="caret">▾</span></div>
      ${STATUS2.map((s) => this.cell(s))}
      <div class="c" style="width:29px">小数</div>
      <div class="c" style="width:8px"><span class="caret">▾</span></div>
      ${STATUS3.map((s) => this.cell(s))}
    </div>`;
  }

  render() {
    return html`<div class="app">
      <div class="appbtn">A</div>
      <div class="titlebar">
        <div class="qat">
          ${["pasteS", "copy", "scale", "edit", "table", "trim"].map((n) => ic(9, 9, svg`<g transform="scale(.9)">${G[n]}</g>`))}
          <span class="caret">▾</span>
          ${ic(9, 9, svg`<g transform="scale(.9)">${G.trim}</g>`)}
          <span class="caret">▾</span>
          ${ic(9, 9, svg`<g transform="scale(.9)">${G.leader}</g>`)}
          <span class="caret">▾</span>
          <span class="caret">▾</span>
        </div>
        <div class="title-text">T20天正建筑软件 V6.0 For Autodesk AutoCAD 2017   2022-11-07--室外卫生间及垃圾存放间 总平 平面 01.dwg</div>
        <div class="info">
          <div class="search">键入关键字或短语</div>
          <div class="u">
            ${ic(8, 8, svg`<circle cx="2" cy="5" r="2" fill="none" stroke="#222"/><circle cx="6" cy="5" r="2" fill="none" stroke="#222"/><path d="M2 3V1M6 3V1" stroke="#222"/>`)}
            ${ic(8, 8, svg`<circle cx="4" cy="2.500" r="2" fill="none" stroke="#222"/><path d="M0 7.500h8" stroke="#222"/>`)}
            <span>登录</span>
            <span class="caret" style="margin-left:25px">▾</span>
            ${ic(9, 8, svg`<rect x="1" y="1" width="7" height="6" fill="#3f6fb0"/><path d="M1 1l7 6M8 1L1 7" stroke="#ddd" stroke-width=".6"/>`)}
            ${ic(9, 8, svg`<path d="M4.500 1l3 6h-6z" fill="none" stroke="#333"/><circle cx="4.500" cy="3" r="1.500" fill="#dde"/>`)}
            <span class="caret">▾</span>
            ${ic(8, 8, svg`<circle cx="4" cy="4" r="3.500" fill="#3f6fb0" stroke="#ddd" stroke-width=".6"/><path d="M3 3a1 1 0 1 1 1 1.500V5" fill="none" stroke="#fff"/>`)}
            <span class="caret">▾</span>
          </div>
        </div>
        <div class="win">
          ${ic(9, 9, svg`<path d="M1 4.500h7" stroke="#333"/>`)}
          ${ic(9, 9, svg`<path d="M1.500 3h5v5h-5zM3 3V1.500h4.500V6H6.500" fill="none" stroke="#333"/>`)}
          ${ic(9, 9, svg`<path d="M1 1l7 7M8 1L1 8" stroke="#333"/>`)}
        </div>
      </div>
      <div class="menubar">
        <div class="items">${MENU.map((m) => html`<span>${m}</span>`)}</div>
        <div class="ctl">
          ${ic(6, 6, svg`<path d="M0 4.500h6" stroke="#ccc"/>`)}
          ${ic(6, 6, svg`<path d="M.5 2h3.500v3.500H.5zM2 2V.5h3.500V4" fill="none" stroke="#ccc"/>`)}
          ${ic(6, 6, svg`<path d="M1 1l4 4M5 1L1 5" stroke="#ccc" stroke-width="1.200"/>`)}
        </div>
      </div>
      <div class="tabs">
        ${TABS.map((t, i) => html`<span class=${i === 0 ? "on" : ""}>${t}</span>`)}
        <span style="margin-left:6px" class="caret">▭ ▾</span>
      </div>
      ${this.renderRibbon()}
      <div class="work">
        ${this.renderT20()}
        ${this.renderGutter()}
        ${this.renderCanvas()}
        ${this.renderRight()}
      </div>
      <div class="bottom">
        <div class="ltabs">
          <span class="on">模型</span><span>布局1</span><span>布局2</span><span>+</span>
        </div>
        ${this.renderStatus()}
      </div>
      <div class="taskbar">
        ${TB.map((b, i) => html`<div class=${DOTTED.has(i) ? "app-i dot" : "app-i"}>${ic(14, 14, b)}</div>`)}
        <div class="app-i on"><span style="color:#d52a2a;font:bold 14px 'Liberation Sans',sans-serif">A</span></div>
        <div class="tray">
          ${TRAY.map((t) => html`<span class="t">${ic(12, 12, t)}</span>`)}
          <span class="eng">ENG</span>
          <span class="t">${ic(12, 12, svg`<rect x="1" y="2" width="8" height="7" fill="none" stroke="#222"/><path d="M9 2h2v9H4" fill="none" stroke="#222"/>`)}</span>
          <span class="t">${ic(12, 12, svg`<path d="M1 4h2l3-2v8L3 8H1z" fill="none" stroke="#444"/><path d="M8 4a3 3 0 0 1 0 4" fill="none" stroke="#aaa"/>`)}</span>
          <div class="clock">20:55<br />2022/11/8</div>
          <div class="badge">8</div>
        </div>
      </div>
    </div>`;
  }
}
